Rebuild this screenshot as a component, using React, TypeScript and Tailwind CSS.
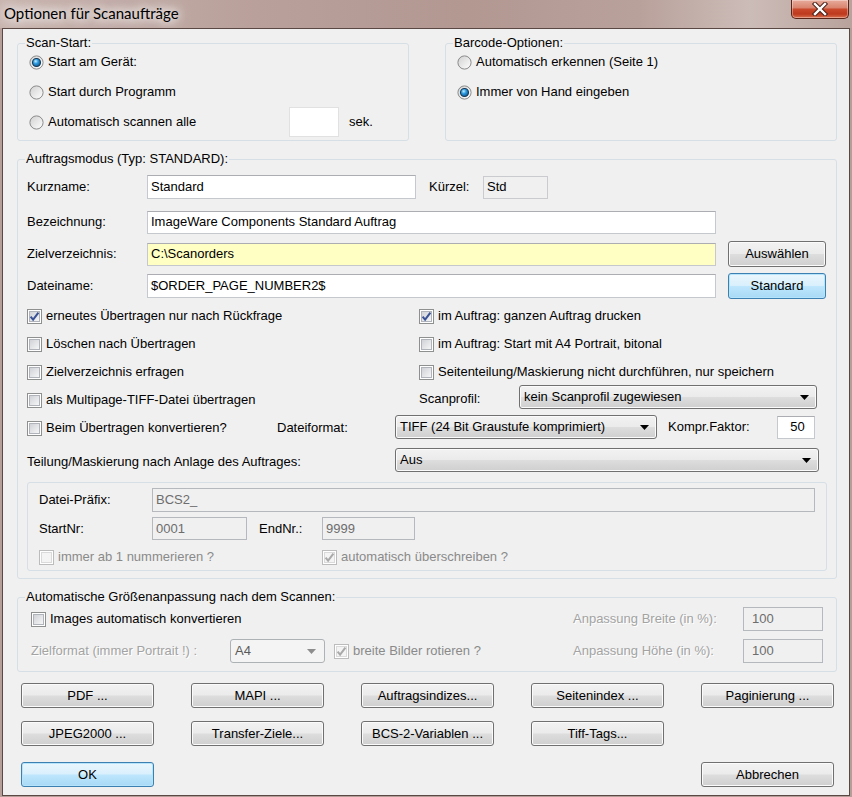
import React from "react";

const FONT = "font-['Liberation_Sans',Arial,sans-serif]";
const INPUT = "border border-[#c5c8cd] border-t-[#abadb3] bg-white flex items-center pl-[3px] whitespace-nowrap overflow-hidden shrink-0";
const INPUT_DIS = "border border-[#b5b9bd] bg-[#f0f0f0] text-[#6d6d6d] flex items-center pl-[3px] whitespace-nowrap overflow-hidden shrink-0";
const BTN = "flex items-center justify-center shrink-0 rounded-[3px] border border-[#707070] bg-[linear-gradient(#f2f2f2_0%,#ebebeb_48%,#dddddd_52%,#cfcfcf_100%)] shadow-[inset_0_0_0_1px_#fbfbfb] text-black whitespace-nowrap";
const BTN_DEF = "flex items-center justify-center shrink-0 rounded-[3px] border border-[#3c7fb1] bg-[linear-gradient(#eaf6fd_0%,#d9f0fc_48%,#bee6fd_52%,#a7d9f5_100%)] shadow-[inset_0_0_0_1px_#b6e4fb] text-black whitespace-nowrap";
const SELECT = "flex items-center justify-between shrink-0 rounded-[3px] border border-[#707070] bg-[linear-gradient(#f2f2f2_0%,#ebebeb_48%,#dddddd_52%,#cfcfcf_100%)] shadow-[inset_0_0_0_1px_#fbfbfb] pl-[4px] pr-[7px] whitespace-nowrap";
const GROUP = "border border-[#d5dfe5] rounded-[3px] p-0 m-0 min-w-0 shrink-0";
const LEGEND = "ml-[7px] px-[1px] leading-[16px]";
const STATIC_DIS = "text-[#a3a3a3] [text-shadow:1px_1px_0_#ffffff]";

function Radio({ checked }: { checked?: boolean }) {
  return (
    <svg width="15" height="15" viewBox="0 0 15 15" className="shrink-0">
      <defs>
        <linearGradient id="rbg" x1="0" y1="0" x2="1" y2="1">
          <stop offset="0" stopColor="#d0d0d0" />
          <stop offset="1" stopColor="#ffffff" />
        </linearGradient>
        <radialGradient id="rdot" cx="0.4" cy="0.35" r="0.75">
          <stop offset="0" stopColor="#c4ecff" />
          <stop offset="0.4" stopColor="#2b9be0" />
          <stop offset="1" stopColor="#0b4a80" />
        </radialGradient>
      </defs>
      <circle cx="7.5" cy="7.5" r="6.6" fill="url(#rbg)" stroke="#8a8a8a" strokeWidth="1" />
      {checked && <circle cx="7.5" cy="7.5" r="4" fill="url(#rdot)" stroke="#1a3b57" strokeWidth="1.1" />}
    </svg>
  );
}

function Check({ checked, disabled }: { checked?: boolean; disabled?: boolean }) {
  return (
    <svg width="15" height="15" viewBox="0 0 15 15" className="shrink-0">
      <defs>
        <linearGradient id="cbin" x1="0" y1="0" x2="1" y2="1">
          <stop offset="0" stopColor="#cdd0d5" />
          <stop offset="1" stopColor="#f8f8f8" />
        </linearGradient>
      </defs>
      <rect x="0.5" y="0.5" width="14" height="14" fill="#ffffff" stroke={disabled ? "#bcbcbc" : "#8e8f8f"} />
      <rect x="2.5" y="2.5" width="10" height="10" fill={disabled ? "#f4f4f4" : "url(#cbin)"} stroke={disabled ? "#dadada" : "#b0b4ba"} />
      {checked && (
        <path d="M3.6 7.6 L6.1 10.6 L11.4 3.6" fill="none" stroke={disabled ? "#a9a9a9" : "#3a5396"} strokeWidth="2" />
      )}
    </svg>
  );
}

function Arrow({ disabled }: { disabled?: boolean }) {
  return (
    <svg width="9" height="5" viewBox="0 0 9 5" className="shrink-0">
      <path d="M0 0 H9 L4.5 5 Z" fill={disabled ? "#8d8d8d" : "#000000"} />
    </svg>
  );
}

function CB({ label, checked, disabled, className }: { label: string; checked?: boolean; disabled?: boolean; className?: string }) {
  return (
    <div className={"flex items-center shrink-0 " + (className || "")}>
      <Check checked={checked} disabled={disabled} />
      <span className={"ml-[4px] whitespace-nowrap " + (disabled ? "text-[#8a8a8a]" : "")}>{label}</span>
    </div>
  );
}

function TitleBar() {
  return (
    <div className="h-[28px] flex items-start shrink-0 bg-[linear-gradient(90deg,#c9b5b0_0%,#b9a09a_30%,#b39892_55%,#b9a19b_75%,#ccbcb8_88%,#b9a29c_100%)]">
      <div className="pl-[4px] pt-[3px] leading-[20px] text-[15px] text-black font-['Lato','Noto_Sans',sans-serif] [text-shadow:0_0_8px_rgba(255,255,255,0.95),0_0_12px_rgba(255,255,255,0.9),0_0_18px_rgba(255,255,255,0.8)]">
        Optionen für Scanaufträge
      </div>
      <div className="ml-auto mr-[3px] w-[58px] h-[19px] rounded-b-[5px] border border-t-0 border-[#5b2419] bg-[linear-gradient(#e8ab9c_0%,#d98570_42%,#c9472b_52%,#be391d_78%,#d8704f_100%)] shadow-[inset_0_0_0_1px_rgba(255,255,255,0.35)] flex items-center justify-center">
        <svg width="18" height="14" viewBox="0 0 18 14">
          <path d="M4 2 L14 12 M14 2 L4 12" stroke="#4a2018" strokeWidth="4.4" strokeLinecap="square" />
          <path d="M4 2 L14 12 M14 2 L4 12" stroke="#ffffff" strokeWidth="2.4" strokeLinecap="square" />
        </svg>
      </div>
    </div>
  );
}

export default function App() {
  return (
    <div className={`w-[852px] h-[797px] overflow-hidden bg-[#b69e98] flex flex-col text-[13px] text-black ${FONT}`}>
      <TitleBar />
      <div className="mx-[2px] mb-[1px] flex-1 border border-[#5a4844] bg-[#f0f0f0] pl-[14px] pt-[6px]">
        {/* Top row */}
        <div className="flex gap-[36px]">
          <fieldset className={GROUP + " w-[392px] h-[106px]"}>
            <legend className={LEGEND}>Scan-Start:</legend>
            <div className="pl-[11px] flex flex-col gap-[8px]">
              <div className="h-[22px] flex items-center">
                <Radio checked />
                <span className="ml-[4px]">Start am Gerät:</span>
              </div>
              <div className="h-[22px] flex items-center">
                <Radio />
                <span className="ml-[4px]">Start durch Programm</span>
              </div>
              <div className="h-[22px] flex items-center">
                <Radio />
                <span className="ml-[4px] w-[241px]">Automatisch scannen alle</span>
                <div className="w-[50px] h-[30px] bg-white border border-[#e1e1e1] shrink-0" />
                <span className="ml-[10px]">sek.</span>
              </div>
            </div>
          </fieldset>
          <fieldset className={GROUP + " w-[392px] h-[106px]"}>
            <legend className={LEGEND}>Barcode-Optionen:</legend>
            <div className="pl-[11px] flex flex-col gap-[8px]">
              <div className="h-[22px] flex items-center">
                <Radio />
                <span className="ml-[4px]">Automatisch erkennen (Seite 1)</span>
              </div>
              <div className="h-[22px] flex items-center">
                <Radio checked />
                <span className="ml-[4px]">Immer von Hand eingeben</span>
              </div>
            </div>
          </fieldset>
        </div>

        {/* Auftragsmodus */}
        <fieldset className={GROUP + " mt-[10px] w-[820px] h-[428px]"}>
          <legend className={LEGEND}>Auftragsmodus (Typ: STANDARD):</legend>
          <div className="pl-[9px] pt-[4px] flex flex-col">
            <div className="h-[32px] flex items-center">
              <span className="w-[120px] shrink-0">Kurzname:</span>
              <div className={INPUT + " w-[269px] h-[24px]"}>Standard</div>
              <span className="ml-[13px] w-[54px] shrink-0">Kürzel:</span>
              <div className="w-[65px] h-[23px] border border-[#c9cbce] bg-[#f0f0f0] flex items-center pl-[3px]">Std</div>
            </div>
            <div className="mt-[3px] h-[32px] flex items-center">
              <span className="w-[120px] shrink-0">Bezeichnung:</span>
              <div className={INPUT + " w-[569px] h-[23px]"}>ImageWare Components Standard Auftrag</div>
            </div>
            <div className="h-[32px] flex items-center">
              <span className="w-[120px] shrink-0">Zielverzeichnis:</span>
              <div className="border border-[#c5c8cd] border-t-[#abadb3] bg-[#ffffc4] flex items-center pl-[3px] shrink-0 w-[569px] h-[23px]">C:\Scanorders</div>
              <div className={BTN + " ml-[12px] w-[98px] h-[26px]"}>Auswählen</div>
            </div>
            <div className="h-[32px] flex items-center">
              <span className="w-[120px] shrink-0">Dateiname:</span>
              <div className={INPUT + " w-[569px] h-[24px]"}>$ORDER_PAGE_NUMBER2$</div>
              <div className={BTN_DEF + " ml-[12px] w-[98px] h-[26px]"}>Standard</div>
            </div>

            <div className="h-[28px] flex items-center">
              <CB className="w-[392px]" checked label="erneutes Übertragen nur nach Rückfrage" />
              <CB checked label="im Auftrag: ganzen Auftrag drucken" />
            </div>
            <div className="h-[28px] flex items-center">
              <CB className="w-[392px]" label="Löschen nach Übertragen" />
              <CB label="im Auftrag: Start mit A4 Portrait, bitonal" />
            </div>
            <div className="h-[28px] flex items-center">
              <CB className="w-[392px]" label="Zielverzeichnis erfragen" />
              <CB label="Seitenteilung/Maskierung nicht durchführen, nur speichern" />
            </div>
            <div className="h-[28px] flex items-center">
              <CB className="w-[392px]" label="als Multipage-TIFF-Datei übertragen" />
              <div className="flex items-center -mt-[6px]">
                <span className="w-[100px] shrink-0 pt-[4px]">Scanprofil:</span>
                <div className={SELECT + " w-[298px] h-[24px]"}>
                  <span>kein Scanprofil zugewiesen</span>
                  <Arrow />
                </div>
              </div>
            </div>
            <div className="h-[28px] flex items-center">
              <CB className="w-[250px]" label="Beim Übertragen konvertieren?" />
              <span className="w-[118px] shrink-0">Dateiformat:</span>
              <div className={SELECT + " w-[262px] h-[24px] -mt-[2px]"}>
                <span>TIFF (24 Bit Graustufe komprimiert)</span>
                <Arrow />
              </div>
              <span className="ml-[11px] w-[109px] shrink-0 -mt-[2px]">Kompr.Faktor:</span>
              <div className={INPUT + " w-[38px] h-[23px] justify-center pl-0 -mt-[2px]"}>50</div>
            </div>
            <div className="mt-[2px] h-[32px] flex items-center">
              <span className="w-[368px] shrink-0 pt-[3px]">Teilung/Maskierung nach Anlage des Auftrages:</span>
              <div className={SELECT + " w-[424px] h-[24px]"}>
                <span>Aus</span>
                <Arrow />
              </div>
            </div>

            <div className="mt-[6px] w-[800px] h-[89px] border border-[#d5dfe5] rounded-[3px] pl-[11px] pt-[5px] flex flex-col">
              <div className="h-[24px] flex items-center">
                <span className="w-[113px] shrink-0">Datei-Präfix:</span>
                <div className={INPUT_DIS + " w-[663px] h-[24px]"}>BCS2_</div>
              </div>
              <div className="mt-[5px] h-[23px] flex items-center">
                <span className="w-[113px] shrink-0">StartNr:</span>
                <div className={INPUT_DIS + " w-[95px] h-[23px]"}>0001</div>
                <span className="ml-[12px] w-[63px] shrink-0">EndNr.:</span>
                <div className={INPUT_DIS + " w-[93px] h-[23px]"}>9999</div>
              </div>
              <div className="mt-[8px] h-[18px] flex items-center">
                <CB className="w-[283px]" disabled label="immer ab 1 nummerieren ?" />
                <CB disabled checked label="automatisch überschreiben ?" />
              </div>
            </div>
          </div>
        </fieldset>

        {/* Größenanpassung */}
        <fieldset className={GROUP + " mt-[10px] w-[820px] h-[83px]"}>
          <legend className={LEGEND}>Automatische Größenanpassung nach dem Scannen:</legend>
          <div className="pl-[13px] pr-[13px] flex flex-col">
            <div className="h-[28px] flex items-center">
              <CB label="Images automatisch konvertieren" />
              <div className="ml-auto flex items-center">
                <span className={STATIC_DIS + " w-[170px]"}>Anpassung Breite (in %):</span>
                <div className={INPUT_DIS + " w-[80px] h-[24px] pl-[8px]"}>100</div>
              </div>
            </div>
            <div className="mt-[2px] h-[32px] flex items-center">
              <span className={STATIC_DIS + " w-[199px] shrink-0"}>Zielformat (immer Portrait !) :</span>
              <div className="flex items-center justify-between shrink-0 rounded-[3px] border border-[#adb2b5] bg-[#f4f4f4] pl-[4px] pr-[8px] w-[95px] h-[24px] text-[#5a5a5a]">
                <span>A4</span>
                <Arrow disabled />
              </div>
              <CB className="ml-[9px]" disabled checked label="breite Bilder rotieren ?" />
              <div className="ml-auto flex items-center">
                <span className={STATIC_DIS + " w-[170px]"}>Anpassung Höhe (in %):</span>
                <div className={INPUT_DIS + " w-[80px] h-[24px] pl-[8px]"}>100</div>
              </div>
            </div>
          </div>
        </fieldset>

        {/* Buttons */}
        <div className="ml-[4px] mt-[11px] flex flex-col">
          <div className="flex gap-[37px]">
            <div className={BTN + " w-[133px] h-[25px]"}>PDF ...</div>
            <div className={BTN + " w-[133px] h-[25px]"}>MAPI ...</div>
            <div className={BTN + " w-[133px] h-[25px]"}>Auftragsindizes...</div>
            <div className={BTN + " w-[133px] h-[25px]"}>Seitenindex ...</div>
            <div className={BTN + " w-[133px] h-[25px]"}>Paginierung ...</div>
          </div>
          <div className="mt-[13px] flex gap-[37px]">
            <div className={BTN + " w-[133px] h-[25px]"}>JPEG2000 ...</div>
            <div className={BTN + " w-[133px] h-[25px]"}>Transfer-Ziele...</div>
            <div className={BTN + " w-[133px] h-[25px]"}>BCS-2-Variablen ...</div>
            <div className={BTN + " w-[133px] h-[25px]"}>Tiff-Tags...</div>
          </div>
          <div className="mt-[16px] w-[813px] flex justify-between">
            <div className={BTN_DEF + " w-[133px] h-[25px]"}>OK</div>
            <div className={BTN + " w-[133px] h-[25px]"}>Abbrechen</div>
          </div>
        </div>
      </div>
    </div>
  );
}
